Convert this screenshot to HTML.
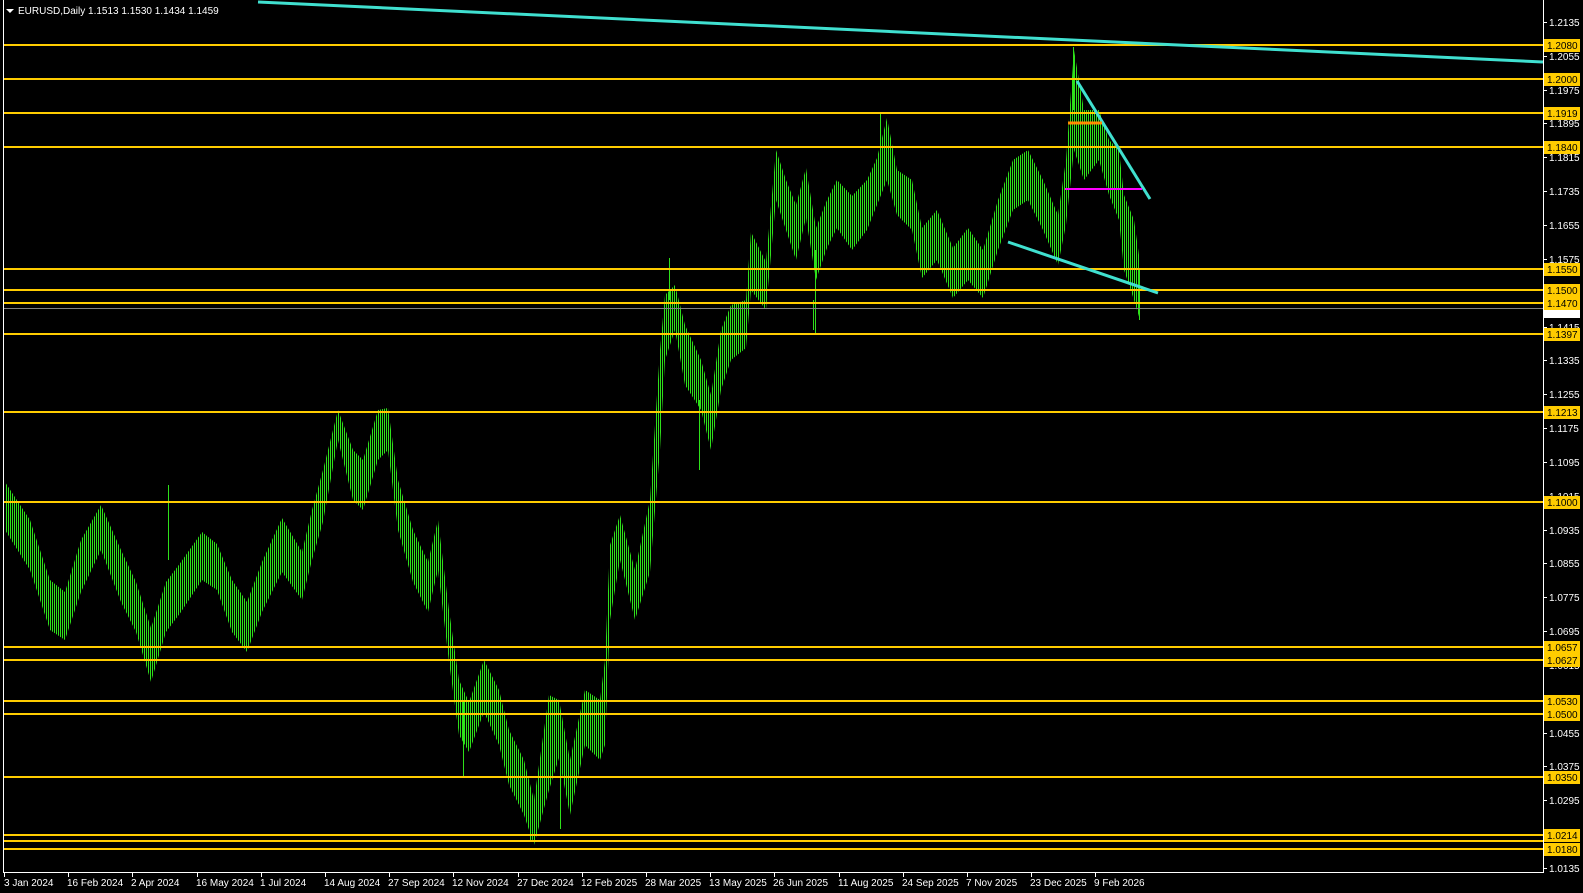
<!DOCTYPE html>
<html><head><meta charset="utf-8">
<style>
html,body{margin:0;padding:0;background:#000;width:1583px;height:893px;overflow:hidden}
svg{display:block}
text{font-family:"Liberation Sans",Tahoma,sans-serif;font-size:10px}
</style></head>
<body>
<svg width="1583" height="893" xmlns="http://www.w3.org/2000/svg">
<defs>
<pattern id="st" patternUnits="userSpaceOnUse" width="2" height="10">
<rect x="0" y="0" width="1" height="10" fill="#2ee01a"/>
</pattern>
</defs>
<rect width="1583" height="893" fill="#000"/>
<polygon fill="url(#st)" points="5,482 30,520 50,580 65,592 81,540 101,505 121,550 136,582 151,628 166,582 181,562 202,532 217,544 232,580 247,602 262,562 282,518 302,552 312,510 323,470 338,410 353,450 363,460 378,410 388,408 398,480 413,530 428,562 438,520 449,610 459,680 469,702 484,660 499,690 509,730 524,760 534,800 549,695 559,700 570,760 585,690 600,700 605,660 610,545 620,515 635,570 650,500 660,350 665,295 675,285 685,325 701,360 711,395 721,330 731,305 746,300 751,232 766,262 776,150 786,180 796,205 806,168 816,228 827,200 837,180 852,196 867,180 877,158 887,118 897,170 912,180 922,228 937,210 953,248 968,228 983,250 998,200 1013,160 1028,150 1043,180 1058,215 1066,160 1074,50 1084,110 1099,110 1109,140 1119,150 1124,195 1134,220 1140,262 1140,320 1134,300 1124,270 1119,220 1109,195 1099,160 1084,180 1074,150 1066,225 1058,265 1043,230 1028,200 1013,210 998,250 983,298 968,280 953,298 937,260 922,278 912,230 897,215 887,180 877,205 867,230 852,250 837,228 827,248 816,280 806,218 796,260 786,230 776,200 766,310 751,290 746,348 731,360 721,390 711,450 701,410 685,385 675,330 665,360 660,450 650,572 635,620 620,560 610,620 605,745 600,760 585,745 570,815 559,758 549,790 534,845 524,815 509,785 499,745 484,712 469,752 459,735 449,662 438,570 428,612 413,582 398,530 388,450 378,460 363,510 353,500 338,440 323,522 312,560 302,600 282,572 262,612 247,652 232,632 217,590 202,580 181,612 166,632 151,682 136,632 121,602 101,550 81,592 65,640 50,630 30,570 5,530"/>
<path d="M168.5 485V560M815.5 250V334M1073.5 47V110M1139.5 270V320M699.5 400V470M463.5 700V778M530.5 800V842M560.5 760V829M669.5 258V300M880.5 113V160M813.5 300V330" stroke="#2ee01a" stroke-width="1"/>
<g stroke="#ffcc00" stroke-width="2">
<line x1="4" x2="1543" y1="45" y2="45"/><line x1="4" x2="1543" y1="79" y2="79"/><line x1="4" x2="1543" y1="113" y2="113"/><line x1="4" x2="1543" y1="147" y2="147"/><line x1="4" x2="1543" y1="269" y2="269"/><line x1="4" x2="1543" y1="290" y2="290"/><line x1="4" x2="1543" y1="303" y2="303"/><line x1="4" x2="1543" y1="334" y2="334"/><line x1="4" x2="1543" y1="412" y2="412"/><line x1="4" x2="1543" y1="502" y2="502"/><line x1="4" x2="1543" y1="647" y2="647"/><line x1="4" x2="1543" y1="660" y2="660"/><line x1="4" x2="1543" y1="701" y2="701"/><line x1="4" x2="1543" y1="714" y2="714"/><line x1="4" x2="1543" y1="777" y2="777"/><line x1="4" x2="1543" y1="835" y2="835"/><line x1="4" x2="1543" y1="841" y2="841"/><line x1="4" x2="1543" y1="849" y2="849"/>
</g>
<line x1="4" x2="1543" y1="308.5" y2="308.5" stroke="#808080" stroke-width="1"/>
<line x1="258" y1="2" x2="1543" y2="62" stroke="#40e0d0" stroke-width="3"/>
<line x1="1077" y1="81" x2="1150" y2="199" stroke="#40e0d0" stroke-width="3"/>
<line x1="1008" y1="242" x2="1158" y2="293" stroke="#40e0d0" stroke-width="3"/>
<line x1="1065" y1="189" x2="1142" y2="189" stroke="#ff00ff" stroke-width="2"/>
<line x1="1068" y1="123" x2="1102" y2="123" stroke="#ff8c00" stroke-width="3"/>
<line x1="3.5" y1="0" x2="3.5" y2="872" stroke="#fff"/>
<line x1="3" y1="872.5" x2="1543" y2="872.5" stroke="#fff"/>
<line x1="1543.5" y1="0" x2="1543.5" y2="873" stroke="#fff"/>
<path stroke="#fff" d="M1543 22.5h4M1543 56.5h4M1543 90.5h4M1543 123.5h4M1543 157.5h4M1543 191.5h4M1543 225.5h4M1543 259.5h4M1543 293.5h4M1543 327.5h4M1543 360.5h4M1543 394.5h4M1543 428.5h4M1543 462.5h4M1543 496.5h4M1543 530.5h4M1543 563.5h4M1543 597.5h4M1543 631.5h4M1543 665.5h4M1543 699.5h4M1543 733.5h4M1543 766.5h4M1543 800.5h4M1543 834.5h4M1543 868.5h4"/>
<g fill="#fff">
<text x="1549" y="26">1.2135</text><text x="1549" y="60">1.2055</text><text x="1549" y="94">1.1975</text><text x="1549" y="127">1.1895</text><text x="1549" y="161">1.1815</text><text x="1549" y="195">1.1735</text><text x="1549" y="229">1.1655</text><text x="1549" y="263">1.1575</text><text x="1549" y="297">1.1495</text><text x="1549" y="331">1.1415</text><text x="1549" y="364">1.1335</text><text x="1549" y="398">1.1255</text><text x="1549" y="432">1.1175</text><text x="1549" y="466">1.1095</text><text x="1549" y="500">1.1015</text><text x="1549" y="534">1.0935</text><text x="1549" y="567">1.0855</text><text x="1549" y="601">1.0775</text><text x="1549" y="635">1.0695</text><text x="1549" y="669">1.0615</text><text x="1549" y="703">1.0535</text><text x="1549" y="737">1.0455</text><text x="1549" y="770">1.0375</text><text x="1549" y="804">1.0295</text><text x="1549" y="838">1.0215</text><text x="1549" y="872">1.0135</text>
</g>
<g fill="#ffcc00">
<rect x="1544" y="39" width="36" height="13"/><rect x="1544" y="73" width="36" height="13"/><rect x="1544" y="107" width="36" height="13"/><rect x="1544" y="141" width="36" height="13"/><rect x="1544" y="263" width="36" height="13"/><rect x="1544" y="284" width="36" height="13"/><rect x="1544" y="297" width="36" height="13"/><rect x="1544" y="328" width="36" height="13"/><rect x="1544" y="406" width="36" height="13"/><rect x="1544" y="496" width="36" height="13"/><rect x="1544" y="641" width="36" height="13"/><rect x="1544" y="654" width="36" height="13"/><rect x="1544" y="695" width="36" height="13"/><rect x="1544" y="708" width="36" height="13"/><rect x="1544" y="771" width="36" height="13"/><rect x="1544" y="829" width="36" height="13"/><rect x="1544" y="843" width="36" height="13"/>
</g>
<rect x="1544" y="310" width="36" height="8" fill="#fff"/>
<g fill="#000">
<text x="1547" y="49">1.2080</text><text x="1547" y="83">1.2000</text><text x="1547" y="117">1.1919</text><text x="1547" y="151">1.1840</text><text x="1547" y="273">1.1550</text><text x="1547" y="294">1.1500</text><text x="1547" y="307">1.1470</text><text x="1547" y="338">1.1397</text><text x="1547" y="416">1.1213</text><text x="1547" y="506">1.1000</text><text x="1547" y="651">1.0657</text><text x="1547" y="664">1.0627</text><text x="1547" y="705">1.0530</text><text x="1547" y="718">1.0500</text><text x="1547" y="781">1.0350</text><text x="1547" y="839">1.0214</text><text x="1547" y="853">1.0180</text>
</g>
<path d="M4.5 872V877M68.5 872V877M132.5 872V877M197.5 872V877M261.5 872V877M325.5 872V877M389.5 872V877M453.5 872V877M518.5 872V877M582.5 872V877M646.5 872V877M710.5 872V877M774.5 872V877M839.5 872V877M903.5 872V877M967.5 872V877M1031.5 872V877M1095.5 872V877" stroke="#fff"/>
<g fill="#fff">
<text x="4" y="886">3 Jan 2024</text><text x="67" y="886">16 Feb 2024</text><text x="131" y="886">2 Apr 2024</text><text x="196" y="886">16 May 2024</text><text x="260" y="886">1 Jul 2024</text><text x="324" y="886">14 Aug 2024</text><text x="388" y="886">27 Sep 2024</text><text x="452" y="886">12 Nov 2024</text><text x="517" y="886">27 Dec 2024</text><text x="581" y="886">12 Feb 2025</text><text x="645" y="886">28 Mar 2025</text><text x="709" y="886">13 May 2025</text><text x="773" y="886">26 Jun 2025</text><text x="838" y="886">11 Aug 2025</text><text x="902" y="886">24 Sep 2025</text><text x="966" y="886">7 Nov 2025</text><text x="1030" y="886">23 Dec 2025</text><text x="1094" y="886">9 Feb 2026</text>
</g>
<polygon points="6,9 14,9 10,13" fill="#fff"/>
<text x="18" y="14" fill="#fff">EURUSD,Daily  1.1513 1.1530 1.1434 1.1459</text>
</svg>
</body></html>
